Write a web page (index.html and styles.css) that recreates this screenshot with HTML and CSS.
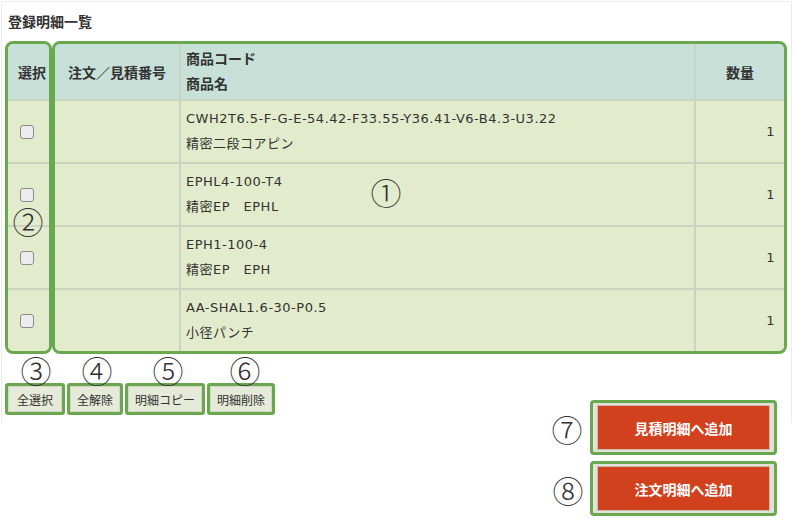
FILE: index.html
```html
<!DOCTYPE html>
<html lang="ja">
<head>
<meta charset="utf-8">
<title>登録明細一覧</title>
<link rel="stylesheet" href="styles.css">
</head>
<body>
<div class="panel">
  <h1 class="title">登録明細一覧</h1>
  <div class="grid">
    <div class="sel-box">
      <div class="cell head sel-head">選択</div>
      <div class="cell sel"><span class="cb"></span></div>
      <div class="cell sel"><span class="cb"></span></div>
      <div class="cell sel"><span class="cb"></span></div>
      <div class="cell sel"><span class="cb"></span></div>
    </div>
    <div class="main-box">
      <div class="cell head center">注文／見積番号</div>
      <div class="cell head lines">商品コード<br>商品名</div>
      <div class="cell head center">数量</div>

      <div class="cell"></div>
      <div class="cell lines body">CWH2T6.5-F-G-E-54.42-F33.55-Y36.41-V6-B4.3-U3.22<br>精密二段コアピン</div>
      <div class="cell qty">1</div>

      <div class="cell"></div>
      <div class="cell lines body">EPHL4-100-T4<br>精密EP　EPHL</div>
      <div class="cell qty">1</div>

      <div class="cell"></div>
      <div class="cell lines body">EPH1-100-4<br>精密EP　EPH</div>
      <div class="cell qty">1</div>

      <div class="cell"></div>
      <div class="cell lines body">AA-SHAL1.6-30-P0.5<br>小径パンチ</div>
      <div class="cell qty">1</div>
    </div>
  </div>
  <div class="tools">
    <button class="btn wide">全選択</button>
    <button class="btn">全解除</button>
    <button class="btn">明細コピー</button>
    <button class="btn">明細削除</button>
  </div>
</div>
<div class="actions">
  <button class="btn-red"><span>見積明細へ追加</span></button>
  <button class="btn-red"><span>注文明細へ追加</span></button>
</div>

<span class="mark m1">①</span>
<span class="mark m2">②</span>
<span class="mark m3">③</span>
<span class="mark m4">④</span>
<span class="mark m5">⑤</span>
<span class="mark m6">⑥</span>
<span class="mark m7">⑦</span>
<span class="mark m8">⑧</span>
</body>
</html>
```

FILE: styles.css
```css
* { box-sizing: border-box; }

body {
  margin: 0;
  width: 794px;
  height: 522px;
  overflow: hidden;
  position: relative;
  background: #fff;
  color: #333;
  font-family: "DejaVu Sans", "Noto Sans CJK JP", sans-serif;
}

.panel {
  margin: 1px 2px 0 1px;
  height: 422px;
  border: 1px solid #ececec;
  border-bottom: 0;
  padding: 9px 4px 0 3px;
}

.title {
  margin: 0 0 10px 3px;
  font-family: "Noto Sans CJK JP", sans-serif;
  font-size: 14px;
  font-weight: bold;
  line-height: 20px;
  color: #333;
}

.grid {
  display: flex;
  height: 313px;
}

.sel-box,
.main-box {
  border: 3px solid #6aa84f;
  border-radius: 8px;
  overflow: hidden;
  display: grid;
  grid-template-rows: 55px repeat(4, 61px);
  gap: 2px;
  background: #cbd4c1;
}

.sel-box {
  width: 47px;
}

.main-box {
  flex: 1;
  grid-template-columns: 124px 1fr 88px;
}

.cell {
  background: #e2ebcb;
  font-size: 13px;
  letter-spacing: 0.5px;
}

.head {
  background: #c7e0d8;
  font-family: "Noto Sans CJK JP", sans-serif;
  font-size: 14px;
  font-weight: bold;
  letter-spacing: 0;
  display: flex;
  align-items: center;
}

.sel-head {
  padding-left: 10px;
}

.center {
  justify-content: center;
}

.lines {
  padding-left: 5px;
  line-height: 25px;
}

.head.lines {
  display: block;
  padding-top: 2px;
}

.body {
  padding-top: 5px;
}

.sel {
  display: flex;
  align-items: center;
  padding-left: 12px;
}

.cb {
  display: block;
  width: 14px;
  height: 14px;
  border: 1px solid #8c8c8c;
  border-radius: 3px;
  background: #ececec;
}

.qty {
  display: flex;
  align-items: center;
  justify-content: flex-end;
  padding-right: 9px;
}

.tools {
  display: flex;
  gap: 2px;
  margin: 29px 0 0 0;
}

.btn {
  height: 32px;
  padding: 0 7px;
  border: 3px solid #6aa84f;
  border-radius: 3px;
  background: #e5ead9;
  box-shadow: inset 0 0 0 1px #d2d6c8;
  font-family: "Noto Sans CJK JP", sans-serif;
  font-size: 12px;
  color: #333;
}

.btn.wide {
  padding: 0 9px;
}

.actions {
  display: flex;
  flex-direction: column;
  align-items: flex-end;
  gap: 6px;
  margin: -23px 17px 0 0;
}

.btn-red {
  width: 187px;
  height: 55px;
  padding: 2px 4px;
  border: 3px solid #6aa84f;
  border-radius: 4px;
  background: #e4e2d8;
  display: flex;
}

.btn-red span {
  flex: 1;
  display: flex;
  align-items: center;
  justify-content: center;
  background: #d1411d;
  border: 1px solid #c4bcae;
  color: #fff;
  font-family: "Noto Sans CJK JP", sans-serif;
  font-size: 14px;
  font-weight: bold;
}

.mark {
  position: absolute;
  width: 40px;
  height: 40px;
  display: flex;
  align-items: center;
  justify-content: center;
  font-family: "Noto Sans CJK JP", sans-serif;
  font-size: 31px;
  font-weight: 300;
  line-height: 1;
  color: #333;
}

.m1 { left: 366px; top: 171px; }
.m2 { left: 8px; top: 200px; }
.m3 { left: 16px; top: 349px; }
.m4 { left: 77px; top: 349px; }
.m5 { left: 148px; top: 349px; }
.m6 { left: 225px; top: 349px; }
.m7 { left: 547px; top: 408px; }
.m8 { left: 548px; top: 469px; }
```
